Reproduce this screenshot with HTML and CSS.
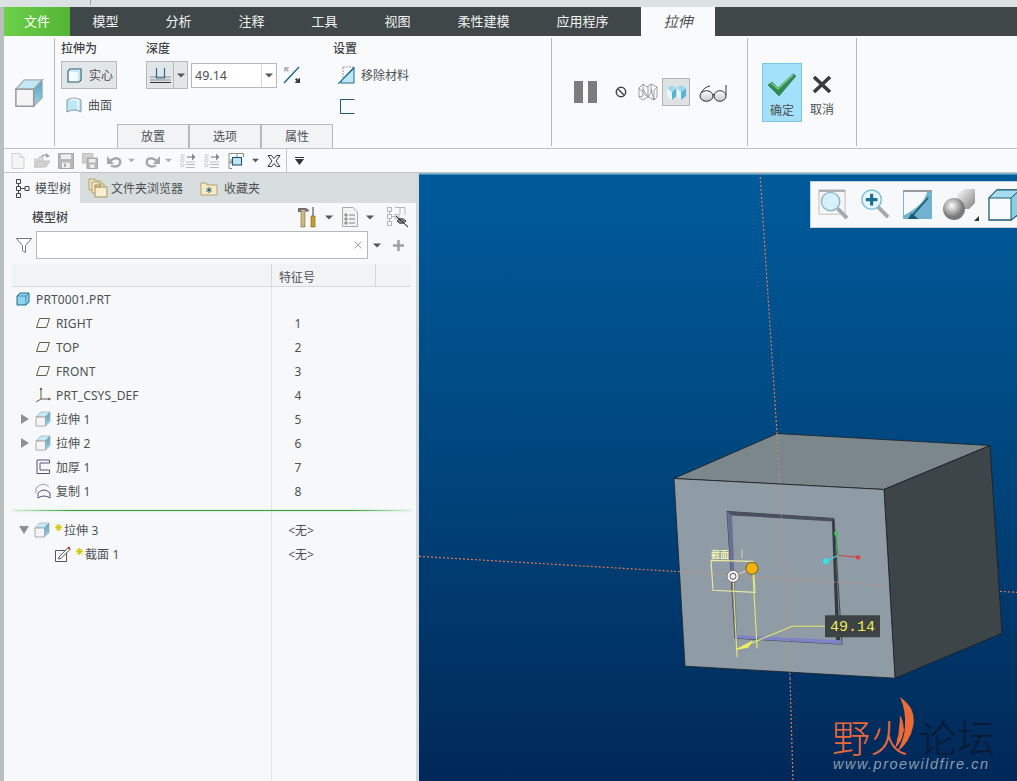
FILE: index.html
```html
<!DOCTYPE html>
<html lang="zh">
<head>
<meta charset="utf-8">
<title>拉伸</title>
<link rel="stylesheet" href="styles.css">
</head>
<body>
<svg class="defs" aria-hidden="true">
  <defs>
    <linearGradient id="cubeSide" x1="0" y1="0" x2="0" y2="1"><stop offset="0" stop-color="#4f9fc2"/><stop offset="1" stop-color="#9ed2e6"/></linearGradient>
    <linearGradient id="lens" x1="0" y1="0" x2="0" y2="1"><stop offset="0" stop-color="#fff"/><stop offset="1" stop-color="#bfc8cc"/></linearGradient>
  </defs>
  <symbol id="cube" viewBox="0 0 16 16">
    <path d="M1 6 5.500 1H15L10.500 6Z" fill="#c5e8f5" stroke="#a3aeb2" stroke-width=".7"/>
    <path d="M10.500 6 15 1V10.500L10.500 15Z" fill="url(#cubeSide)" stroke="#a3aeb2" stroke-width=".7"/>
    <path d="M1 6H10.500V15H1Z" fill="#f5f5f5" stroke="#9a9a9a" stroke-width=".8"/>
  </symbol>
  <symbol id="plane" viewBox="0 0 16 12">
    <path d="M4.500 1.500H14.500L11.500 10.500H1.500Z" fill="none" stroke="#6b5a3c" stroke-width="1"/>
  </symbol>
  <symbol id="caret" viewBox="0 0 8 5">
    <path d="M0 .5H8L4 4.500Z" fill="#555"/>
  </symbol>
  <symbol id="star" viewBox="0 0 7 7">
    <path d="M3.500 0V7M0 3.500H7M1 1 6 6M6 1 1 6" stroke="#d8c800" stroke-width="1.100"/>
  </symbol>
</svg>

<div class="topstrip"><i class="tick"></i></div>

<nav class="menubar">
  <a class="tab file">文件</a>
  <a class="tab">模型</a>
  <a class="tab">分析</a>
  <a class="tab">注释</a>
  <a class="tab">工具</a>
  <a class="tab">视图</a>
  <a class="tab">柔性建模</a>
  <a class="tab">应用程序</a>
  <a class="tab current">拉伸</a>
</nav>

<section class="ribbon">
  <div class="g-type">
    <svg class="ic-type"><use href="#cube"/></svg>
  </div>
  <i class="sep"></i>
  <div class="g-main">
    <div class="cols">
      <div class="col col-a">
        <h4 class="lbl">拉伸为</h4>
        <button class="btn-solid">
          <svg class="i15" viewBox="0 0 15 15"><path d="M1 3 3 1H14V12L12 14H1Z" fill="#f4fbfe" stroke="#1d5a70" stroke-width="1.100"/><path d="M12 3V14M12 3H1" stroke="#8fcbe2" stroke-width=".8" fill="none"/></svg>
          <span>实心</span>
        </button>
        <div class="opt-surface">
          <svg class="i16" viewBox="0 0 16 16"><path d="M1 3Q8 -1 15 3V15Q8 11 1 15Z" fill="#bde6f7" stroke="#7d9aa6"/><path d="M4 3Q8 1.500 12 3V12" fill="none" stroke="#f2fbff" stroke-width="1.500"/></svg>
          <span>曲面</span>
        </div>
      </div>
      <div class="col col-b">
        <h4 class="lbl">深度</h4>
        <div class="depth">
          <div class="split">
            <span class="split-main"><svg class="i20" viewBox="0 0 21 15"><path d="M0 9H21M0 12H21" stroke="#8a8a8a"/><path d="M0 14.500H21" stroke="#333"/><path d="M6.500 0V10H14.500V0" stroke="#1e6f96" fill="none" stroke-width="1.200"/></svg></span>
            <span class="split-arrow"><svg class="caret"><use href="#caret"/></svg></span>
          </div>
          <div class="numbox">
            <span class="num">49.14</span>
            <span class="num-arrow"><svg class="caret"><use href="#caret"/></svg></span>
          </div>
          <svg class="i-flip" viewBox="0 0 18 18"><path d="M1 17 16 1" stroke="#1d6d8d" stroke-width="1.500"/><path d="M1 1H6.500L4.500 3 6 4.500 4.500 6 3 4.500 1 6.500Z" fill="#b5b5b5"/><path d="M17 17H11.500L13.500 15 12 13.500 13.500 12 15 13.500 17 11.500Z" fill="#3c3c3c"/></svg>
          <div class="remove">
            <svg class="i18" viewBox="0 0 18 18"><path d="M3 15 16 1V17H3Z" fill="#bde6f7" stroke="#1d6d8d"/><path d="M5 1H16" stroke="#999" stroke-dasharray="2 1"/><path d="M5 1V12" stroke="#999" stroke-dasharray="2 1"/><path d="M0 18 16 2" stroke="#1d6d8d" stroke-width="1.200"/></svg>
            <span>移除材料</span>
          </div>
        </div>
        <svg class="i-thick" viewBox="0 0 15 15"><path d="M14.500 .5H.5V14.500H14.500" fill="none" stroke="#1d5a70"/></svg>
        <h4 class="lbl lbl-set">设置</h4>
      </div>
    </div>
    <div class="subtabs">
      <a class="subtab">放置</a>
      <a class="subtab">选项</a>
      <a class="subtab">属性</a>
    </div>
  </div>
  <i class="sep"></i>
  <div class="g-preview">
    <svg class="i-pause" viewBox="0 0 23 22"><rect x="0" width="9" height="22" fill="#7d7d7d"/><rect x="14" width="9" height="22" fill="#7d7d7d"/></svg>
    <svg class="i-stop" viewBox="0 0 12 12"><circle cx="6" cy="6" r="4.700" fill="none" stroke="#444" stroke-width="1.500"/><path d="M3 3 9 9" stroke="#444" stroke-width="1.500"/></svg>
    <svg class="i-wire" viewBox="0 0 20 18"><path d="M1 5 5 1 9 4 13 1 19 4 16 7V17L10 14 5 17 1 14ZM5 1V13L1 14M5 6 10 14V3M13 1V10L10 14M13 6 16 17M19 4V14L16 17M1 5 8 13" fill="none" stroke="#666" stroke-width=".6"/></svg>
    <span class="active-view"><svg class="i-shade" viewBox="0 0 19 15"><path d="M0 3 5 7V15L0 11Z" fill="#e9f6fb"/><path d="M5 7 9.500 3V11L5 15Z" fill="#59b3d8"/><path d="M9.500 3 14 7V15L9.500 11Z" fill="#e9f6fb"/><path d="M14 7 19 3V11L14 15Z" fill="#59b3d8"/><path d="M0 3 5 0 9.500 3 5 7ZM9.500 3 14 0 19 3 14 7Z" fill="#9ed9ef"/></svg></span>
    <svg class="i-glass" viewBox="0 0 28 17"><path d="M2 8Q5 2 11 1M27 0V10" fill="none" stroke="#333"/><ellipse cx="7.500" cy="11" rx="6.500" ry="5.300" fill="url(#lens)" stroke="#333"/><ellipse cx="21" cy="11" rx="6" ry="5.300" fill="url(#lens)" stroke="#333"/><path d="M14 10Q15 9 15.500 10" fill="none" stroke="#333"/></svg>
  </div>
  <i class="sep"></i>
  <div class="g-confirm">
    <div class="confirm ok">
      <svg class="i-check" viewBox="0 0 30 24"><path d="M1 12 5 9 11 15 26 1 29 3 12 23Z" fill="#2f8a55" stroke="#1f6a40" stroke-width=".5"/><path d="M4 10 11 16 26 2" fill="none" stroke="#7fcf7f" stroke-width="1.200"/></svg>
      <span>确定</span>
    </div>
    <div class="confirm cancel">
      <svg class="i-x" viewBox="0 0 20 17"><path d="M2 1 18 16M18 1 2 16" stroke="#3a3a3a" stroke-width="3.600"/></svg>
      <span>取消</span>
    </div>
  </div>
  <i class="sep"></i>
</section>

<div class="quick">
  <svg class="qi" viewBox="0 0 16 16"><path d="M2 .5H10L14 4.500V15.500H2Z" fill="#f3f4f4" stroke="#d0d2d2"/><path d="M10 .5V4.500H14" fill="none" stroke="#d0d2d2"/></svg>
  <svg class="qi" viewBox="0 0 16 16"><path d="M0 6H5V4H9V14H0Z" fill="#dcdcdc" stroke="#c0c0c0" stroke-width=".7"/><path d="M0 14 3 8H16L12 14Z" fill="#d2d2d2" stroke="#b8b8b8" stroke-width=".7"/><path d="M7 4Q10 1 13 2.500" fill="none" stroke="#a8a8a8" stroke-width="1.400"/><path d="M12 0 16 3 12 5Z" fill="#a8a8a8"/></svg>
  <svg class="qi" viewBox="0 0 16 16"><path d="M.5 .5H15.500V15.500H.5Z" fill="#b8b8b8" stroke="#a8a8a8"/><path d="M3 1.500H13V6H3Z" fill="#eeeeee"/><path d="M4 9.500H12V15H4Z" fill="#efefef"/><path d="M6 10.500H8V14H6Z" fill="#b0b0b0"/></svg>
  <svg class="qi" viewBox="0 0 16 16"><path d="M.5 .5H11V10H.5Z" fill="#d0d0d0" stroke="#c0c0c0"/><path d="M5 5H15.500V15.500H5Z" fill="#b8b8b8" stroke="#a8a8a8"/><path d="M7 6H13.500V9.500H7ZM8 11.500H12.500V15H8Z" fill="#eee"/></svg>
  <svg class="qi-w" viewBox="0 0 18 16"><path d="M5 12.500Q9 14.500 12.500 12.500 15.500 10 13.500 6.500 10 3.500 4 8" fill="none" stroke="#a8a8a8" stroke-width="2.400"/><path d="M1 3V11H8Z" fill="#a8a8a8"/></svg>
  <svg class="qc"><use href="#caret"/></svg>
  <svg class="qi-w" viewBox="0 0 18 16"><path d="M13 12.500Q9 14.500 5.500 12.500 2.500 10 4.500 6.500 8 3.500 14 8" fill="none" stroke="#a8a8a8" stroke-width="2.400"/><path d="M17 3V11H10Z" fill="#a8a8a8"/></svg>
  <svg class="qc"><use href="#caret"/></svg>
  <svg class="qi" viewBox="0 0 16 16"><path d="M1 2H4V4.500H1ZM1 6.500H4V9H1ZM1 11H4V13.500H1Z" fill="none" stroke="#aaa" stroke-width=".8" stroke-dasharray="1 .6"/><path d="M6 9H15M6 11.500H15M6 14.500H15" stroke="#bbb"/><path d="M7 4H14" stroke="#909090" stroke-width="1.300"/><path d="M12 .5 15.500 4 12 7.500Z" fill="#8a8a8a"/></svg>
  <svg class="qi" viewBox="0 0 16 16"><path d="M1 2H4V4.500H1ZM1 6.500H4V9H1ZM1 11H4V13.500H1Z" fill="none" stroke="#aaa" stroke-width=".8" stroke-dasharray="1 .6"/><path d="M6 9H15M6 11.500H15M6 14.500H15" stroke="#bbb"/><path d="M7 4H14" stroke="#909090" stroke-width="1.300"/><path d="M12 .5 15.500 4 12 7.500Z" fill="#8a8a8a"/></svg>
  <svg class="qi" viewBox="0 0 16 16"><path d="M1 4.500V.5H15.500V4M1 4.500V15.500H4M1 9H5M3 6V11M9 .5V4" fill="none" stroke="#8d8d8d"/><rect x="4.500" y="4.500" width="9" height="7.500" fill="#bfe6f5" stroke="#1d5a70" stroke-width="1.100"/></svg>
  <svg class="qc qc-dark"><use href="#caret"/></svg>
  <svg class="qx" viewBox="0 0 14 12"><path d="M1 .5H4.500L7 3.500 9.500 .5H13L9 6 13 11.500H9.500L7 8.500 4.500 11.500H1L5 6Z" fill="#f8f8f8" stroke="#3a3a3a"/></svg>
  <i class="qsep"></i>
  <svg class="qmore" viewBox="0 0 9 8"><path d="M0 .5H9" stroke="#333"/><path d="M0 2H9L4.500 8Z" fill="#333"/></svg>
</div>

<main class="work">
  <aside class="panel">
    <div class="ptabs">
      <a class="ptab on">
        <svg class="i-tree" viewBox="0 0 15 19"><path d="M1.500 .5H5.500V4.500H1.500ZM1.500 7.500H5.500V11.500H1.500ZM1.500 14.500H5.500V18.500H1.500ZM10 7.500H14V11.500H10ZM3.500 4.500V7.500M3.500 11.500V14.500M5.500 9.500H10" fill="none" stroke="#444"/></svg>
        <span>模型树</span>
      </a>
      <a class="ptab">
        <svg class="i-folders" viewBox="0 0 20 20"><path d="M1 1H7L8 3H13V12H1Z" fill="#f1e3b8" stroke="#b2a070"/><path d="M4 4H10L11 6H16V15H4Z" fill="#f4e8c2" stroke="#b2a070"/><path d="M7 9H19V19H7Z" fill="#f7eecf" stroke="#a5925e"/><path d="M7 9H12L13 7H7Z" fill="#e9d69b" stroke="#a5925e"/></svg>
        <span>文件夹浏览器</span>
      </a>
      <a class="ptab">
        <svg class="i-fav" viewBox="0 0 18 15"><path d="M1 2H6L7 4H17V14H1Z" fill="#f6ebc4" stroke="#b2a070"/><path d="M9 6V12M6.400 7.500 11.600 10.500M11.600 7.500 6.400 10.500" stroke="#1d5a70"/></svg>
        <span>收藏夹</span>
      </a>
    </div>

    <div class="phead">
      <strong class="ptitle">模型树</strong>
      <svg class="i-tools" viewBox="0 0 18 21"><path d="M3 4H7V20H3Z" fill="#d0b97f" stroke="#7a6840" stroke-width=".6"/><path d="M0 5V1H8L11 3V4.500H7V3H3V5Z" fill="#6f6f6f"/><path d="M14 0H16V9H14Z" fill="#999"/><path d="M13 9H17V20H13Z" fill="#c9a02a" stroke="#6b5a20" stroke-width=".6"/></svg>
      <svg class="c1"><use href="#caret"/></svg>
      <svg class="i-list" viewBox="0 0 16 20"><path d="M.5 .5H11L15.500 5V19.500H.5Z" fill="#f2f3f3" stroke="#aaa"/><path d="M3 7H5V9H3ZM3 11H5V13H3ZM3 15H5V17H3ZM7 8H13M7 12H13M7 16H13" fill="none" stroke="#666" stroke-width=".8"/></svg>
      <svg class="c2"><use href="#caret"/></svg>
      <svg class="i-eye" viewBox="0 0 22 22"><path d="M.5 1.500H4.500V5.500H.5ZM.5 8.500H4.500V12.500H.5ZM.5 15.500H4.500V19.500H.5ZM8 8.500H12V12.500H8ZM2.500 5.500V8.500M2.500 12.500V15.500M4.500 10.500H8M8 1.500H18M13 1.500V8M18 1.500V9" fill="none" stroke="#b5b5b5"/><path d="M10 15Q14 10 19 15Q14 20 10 15Z" fill="#8a8a8a" stroke="#222" stroke-width=".8"/><path d="M9 10 21 21" stroke="#111"/></svg>
    </div>

    <div class="pfilter">
      <svg class="i-funnel" viewBox="0 0 16 15"><path d="M.5 .5H15.500L9.500 7.500V14.500L6.500 12.500V7.500Z" fill="#fff" stroke="#777"/></svg>
      <div class="search"><svg class="i-clear" viewBox="0 0 8 8"><path d="M.5 .5 7.500 7.500M7.500 .5 .5 7.500" stroke="#a5a5a5"/></svg></div>
      <svg class="c3"><use href="#caret"/></svg>
      <svg class="i-plus" viewBox="0 0 11 11"><path d="M5.500 0V11M0 5.500H11" stroke="#a0a0a0" stroke-width="2.500"/></svg>
    </div>

    <div class="thead">
      <span class="th-name"></span>
      <span class="th-id">特征号</span>
      <span class="th-last"></span>
    </div>

    <div class="tree">
      <div class="row root"><div class="name"><svg class="i-part" viewBox="0 0 14 14"><path d="M1 4 4 1H13V10L10 13H1Z" fill="#8fd3ef" stroke="#1d6d8d"/><path d="M1 4H10V13M10 4 13 1" fill="none" stroke="#1d6d8d" stroke-width=".7"/></svg><span>PRT0001.PRT</span></div><div class="id"></div></div>
      <div class="row"><div class="name"><i class="arr"></i><svg class="i-plane"><use href="#plane"/></svg><span>RIGHT</span></div><div class="id">1</div></div>
      <div class="row"><div class="name"><i class="arr"></i><svg class="i-plane"><use href="#plane"/></svg><span>TOP</span></div><div class="id">2</div></div>
      <div class="row"><div class="name"><i class="arr"></i><svg class="i-plane"><use href="#plane"/></svg><span>FRONT</span></div><div class="id">3</div></div>
      <div class="row"><div class="name"><i class="arr"></i><svg class="i-ti" viewBox="0 0 16 16"><path d="M6 1V12L1 15M6 12H15" fill="none" stroke="#6b5a3c"/><path d="M4.500 3 6 .5 7.500 3ZM13.500 10.500 16 12 13.500 13.500Z" fill="#6b5a3c"/></svg><span>PRT_CSYS_DEF</span></div><div class="id">4</div></div>
      <div class="row"><div class="name"><i class="arr tri-r"></i><svg class="i-ti"><use href="#cube"/></svg><span>拉伸 1</span></div><div class="id">5</div></div>
      <div class="row"><div class="name"><i class="arr tri-r"></i><svg class="i-ti"><use href="#cube"/></svg><span>拉伸 2</span></div><div class="id">6</div></div>
      <div class="row"><div class="name"><i class="arr"></i><svg class="i-ti" viewBox="0 0 16 16"><path d="M2 1H14.500V4H5V11H14.500V14.500H2Z" fill="#fbfcfc" stroke="#5f4b82" stroke-width="1"/></svg><span>加厚 1</span></div><div class="id">7</div></div>
      <div class="row"><div class="name"><i class="arr"></i><svg class="i-ti" viewBox="0 0 16 16"><path d="M1 10V5Q8 -2 14 4" fill="none" stroke="#9a9a9a"/><path d="M3 15V10Q9 4 15 10V15Q9 11 3 15Z" fill="none" stroke="#5f4b82"/></svg><span>复制 1</span></div><div class="id">8</div></div>
      <div class="insert"></div>
      <div class="row"><div class="name"><i class="arr tri-d"></i><svg class="i-ti"><use href="#cube"/></svg><svg class="i-star"><use href="#star"/></svg><span class="after-star">拉伸 3</span></div><div class="id none">&lt;无&gt;</div></div>
      <div class="row sub"><div class="name"><svg class="i-ti" viewBox="0 0 16 16"><path d="M.5 4.500H11.500V15.500H.5Z" fill="#fafafa" stroke="#555"/><path d="M4 11 13 1.500 15 3.500 6 12.500 3.500 13Z" fill="#f4f4f4" stroke="#333" stroke-width=".8"/><path d="M12.500 2 14.500 4 15.500 2 14 .5Z" fill="#c0392b"/></svg><svg class="i-star"><use href="#star"/></svg><span class="after-star">截面 1</span></div><div class="id none">&lt;无&gt;</div></div>
    </div>
  </aside>

  <div class="gutter"></div>

  <div class="viewport">
    <svg class="scene" viewBox="419 172 598 609" preserveAspectRatio="none">
      <defs>
        <linearGradient id="bg" x1="0" y1="0" x2="0" y2="1">
          <stop offset="0" stop-color="#005b9b"/>
          <stop offset=".45" stop-color="#00477f"/>
          <stop offset="1" stop-color="#012858"/>
        </linearGradient>
      </defs>
      <rect x="419" y="172" width="598" height="609" fill="url(#bg)"/>
      <rect x="419" y="172" width="598" height="1.500" fill="#7fb6d0"/>
      <path d="M760 172 777 433" class="dash-o"/>
      <path d="M419 556 674 571" class="dash-o"/>
      <path d="M790 678 793 781" class="dash-o"/>
      <path d="M884 585 1017 592" class="dash-o"/>

      <path d="M777 433 990 445 884 489 674 478Z" fill="#7c878c" stroke="#1a1f22" stroke-width=".8"/>
      <path d="M884 489 990 445 1002 633 895 678Z" fill="#3e4548" stroke="#1a1f22" stroke-width=".8"/>
      <path d="M674 478 884 489 895 678 685 666Z" fill="#8f9ca6" stroke="#1a1f22" stroke-width=".8"/>

      <path d="M727 511 834 518 842 644 735 638Z" fill="none" stroke="#2a2f33" stroke-width=".8"/>
      <path d="M727 511 732 515 737 636 735 638Z" fill="#6a7095"/>
      <path d="M727 511 834 518 833 521 732 515Z" fill="#4b4f60"/>
      <path d="M832 521 834 518 840 640 836 640Z" fill="#353a42"/>
      <path d="M737 635 841 640 842 644 735 638Z" fill="#7d83c4"/>

      <path d="M777 433 780 489 790 678" class="dash-o dash-in"/>
      <path d="M674 571 884 585" class="dash-o dash-in"/>

      <path d="M711 560 753 561 755 592 713 590Z" fill="none" stroke="#eaeaa0" stroke-width="1.100"/>
      <text x="711" y="558" class="sec-lbl">截面</text>
      <path d="M742 549V558" stroke="#d8d8a0" stroke-width="1"/>
      <path d="M733 576 737 657M753 573 757 648" stroke="#e9e76a" stroke-width="1.100" fill="none"/>
      <path d="M737 649 792 626H825" stroke="#e9e76a" stroke-width="1.100" fill="none"/>
      <path d="M737 649 752 641 748 647Z" fill="#f0ee60" stroke="#f0ee60"/>
      <path d="M733 576 752 568" stroke="#c8c0c0" stroke-width="1.500"/>
      <circle cx="733" cy="576" r="6" fill="#f2f2f2" stroke="#555" stroke-width=".7"/>
      <circle cx="733" cy="576" r="3" fill="none" stroke="#555"/>
      <circle cx="752" cy="568" r="6" fill="#f5b30c" stroke="#6d5a1a"/>

      <path d="M838 555 836 533" stroke="#36b24a" stroke-width="1.300"/>
      <path d="M838 555 858 557" stroke="#c74444" stroke-width="1"/>
      <path d="M838 555 826 561" stroke="#4fc5d0" stroke-width="1.300"/>
      <circle cx="836" cy="533" r="2" fill="#35d04f"/>
      <circle cx="858" cy="557" r="2.200" fill="#e53b3b"/>
      <circle cx="826" cy="561" r="3" fill="#35e0ea"/>

      <rect x="825" y="615" width="55" height="22" fill="#3d4244"/>
      <text x="830" y="631" class="dim">49.14</text>

      <text x="832" y="752" class="wm wm-o">野火</text>
      <text x="919" y="752" class="wm wm-k">论坛</text>
      <path d="M900 697Q917 708 913 727 910 742 897 752 905 738 905 726 906 710 900 697Z" fill="#ec6a36"/>
      <path d="M900 715Q906 725 902 738 899 745 895 748 899 735 899 728 900 722 900 715Z" fill="#ec6a36"/>
      <text x="833" y="769" class="url">www.proewildfire.cn</text>
    </svg>

    <div class="vtools">
      <svg class="vt" viewBox="0 0 32 32"><path d="M1 1H28V26H1Z" fill="#f6f6f6" stroke="#bdbdbd"/><path d="M1 1H28V3H1Z" fill="#aaa"/><path d="M20 20 30 30" stroke="#a8a8a8" stroke-width="4"/><circle cx="13" cy="13" r="9.500" fill="#d6f0f9" stroke="#8fb8c8" stroke-width="1.500"/></svg>
      <svg class="vt" viewBox="0 0 32 32"><path d="M18 18 29 29" stroke="#a8a8a8" stroke-width="4"/><circle cx="12" cy="11" r="10" fill="#e6f5fb" stroke="#7fc0d8" stroke-width="1.500"/><path d="M12 5V17M6 11H18" stroke="#1d6d8d" stroke-width="3.200"/></svg>
      <svg class="vt" viewBox="0 0 32 32"><path d="M1 1H31V31H1Z" fill="#6fb3cf"/><path d="M1 1H31V3H1Z" fill="#9a9a9a"/><path d="M2 3H26Q22 17 2 27Z" fill="#f6f8f9"/><path d="M10 28 27 9" stroke="#1d5a70" stroke-width="1.800"/><path d="M6 31 10 25 17 31Z" fill="#1d5a70"/></svg>
      <svg class="vt vt-shade" viewBox="0 0 36 32"><defs><radialGradient id="sp" cx=".4" cy=".35"><stop offset="0" stop-color="#fff"/><stop offset="1" stop-color="#7a7a7a"/></radialGradient><linearGradient id="bx" x1="0" y1="0" x2="1" y2="1"><stop offset="0" stop-color="#fff"/><stop offset="1" stop-color="#808080"/></linearGradient></defs><path d="M14 5 21 0H32V14L26 20H14Z" fill="url(#bx)"/><circle cx="11" cy="20" r="11" fill="url(#sp)"/><path d="M36 32H31L36 27Z" fill="#333"/></svg>
      <svg class="vt vt-cube" viewBox="0 0 32 32"><path d="M1 9 9 1H32V24L23 31H1Z" fill="#f8fcfe" stroke="#1d5a70" stroke-width="1.300"/><path d="M1 9 9 1H32L23 9Z" fill="#a6dcf0" stroke="#1d5a70" stroke-width="1"/><path d="M23 9 32 1V24L23 31Z" fill="#8acde6" stroke="#1d5a70" stroke-width="1"/></svg>
    </div>
  </div>
</main>
</body>
</html>
```

FILE: styles.css
```css
* { box-sizing: border-box; }
html, body { margin: 0; padding: 0; }
body {
  width: 1017px;
  height: 781px;
  overflow: hidden;
  display: flex;
  flex-direction: column;
  background: #b9bebf;
  font-family: "Noto Sans", "Noto Sans CJK SC", sans-serif;
  font-size: 12px;
  color: #4c5154;
}
.defs { display: block; width: 0; height: 0; }
svg { display: block; flex: none; }
i { display: block; flex: none; }
a { display: block; }

/* top */
.topstrip { height: 7px; background: #dce1e1; padding-left: 90px; flex: none; }
.tick { width: 1px; height: 5px; background: #9da2a3; }

.menubar {
  height: 29px;
  flex: none;
  background: #3f4749;
  display: flex;
  margin-left: 4px;
  font-size: 13px;
  line-height: 29px;
  color: #f2f4f4;
}
.tab { padding: 0 23.500px; white-space: nowrap; }
.tab.file {
  width: 66px;
  padding: 0;
  margin-right: -1px;
  text-align: center;
  background: linear-gradient(90deg, #6bd048, #54b436);
  color: #fff;
}
.tab.current {
  margin-left: 9px;
  width: 74px;
  padding: 0;
  text-align: center;
  background: #f8fafb;
  color: #4c5154;
  font-size: 14.500px;
  font-style: italic;
}

/* ribbon */
.ribbon {
  height: 113px;
  flex: none;
  margin-left: 4px;
  background: #f8fafb;
  border-bottom: 1px solid #c0c4c4;
  display: flex;
}
.sep { width: 1px; margin: 2px 0; background: #b8bcbd; }
.g-type { width: 50px; display: flex; align-items: center; padding-left: 10px; padding-top: 1px; }
.ic-type { width: 30px; height: 30px; }

.g-main { width: 496px; display: flex; flex-direction: column; padding-left: 6px; }
.cols { height: 88px; display: flex; padding-top: 5px; }
.col { position: relative; }
.col-a { width: 85px; }
.col-b { width: 340px; }
.lbl { margin: 0; font-size: 12px; line-height: 16px; font-weight: 500; color: #3f4447; }
.lbl-set { position: absolute; left: 187px; top: 0; }

.btn-solid {
  width: 56px;
  height: 28px;
  margin-top: 4px;
  padding: 0 0 0 5px;
  border: 1px solid #b5b9ba;
  background: #e3e6e7;
  display: flex;
  align-items: center;
  gap: 7px;
  font: inherit;
  color: inherit;
}
.i15 { width: 15px; height: 15px; }
.opt-surface { display: flex; align-items: center; gap: 6px; margin-top: 8px; padding-left: 5px; height: 16px; }
.i16 { width: 16px; height: 16px; }

.depth { display: flex; align-items: center; margin-top: 4px; height: 28px; }
.split { width: 42px; height: 28px; display: flex; border: 1px solid #b5b9ba; background: #e3e6e7; }
.split-main { width: 27px; display: flex; align-items: center; justify-content: center; border-right: 1px solid #b5b9ba; }
.i20 { width: 21px; height: 15px; }
.split-arrow { flex: 1; display: flex; align-items: center; justify-content: center; }
.caret { width: 8px; height: 5px; }
.numbox {
  width: 86px;
  height: 25px;
  margin-left: 3px;
  border: 1px solid #b5b9ba;
  background: #fff;
  display: flex;
  align-items: center;
}
.num { width: 69px; padding-left: 3px; font-size: 12.500px; }
.num-arrow { flex: 1; height: 100%; display: flex; align-items: center; justify-content: center; border-left: 1px solid #d5d8d9; }
.i-flip { width: 18px; height: 18px; margin-left: 6px; }
.remove { display: flex; align-items: center; gap: 5px; margin-left: 37px; }
.i18 { width: 18px; height: 18px; }
.i-thick { width: 15px; height: 15px; margin: 10px 0 0 194px; }

.subtabs { display: flex; margin-left: 56px; height: 24px; }
.subtab {
  width: 72px;
  height: 24px;
  text-align: center;
  line-height: 24px;
  background: #f1f3f4;
  border: 1px solid #b5b9ba;
  border-bottom: 0;
}

.g-preview { width: 195px; display: flex; align-items: center; padding-left: 22px; }
.i-pause { width: 23px; height: 22px; }
.i-stop { width: 12px; height: 12px; margin-left: 18px; }
.i-wire { width: 20px; height: 18px; margin-left: 11px; }
.active-view { width: 28px; height: 28px; margin-left: 4px; background: #dfe2e3; border: 1px solid #b0b4b5; display: flex; align-items: center; justify-content: center; }
.i-shade { width: 19px; height: 15px; }
.i-glass { width: 28px; height: 17px; margin-left: 9px; margin-top: 2px; }

.g-confirm { width: 108px; display: flex; padding: 27px 0 0 14px; }
.confirm { display: flex; flex-direction: column; align-items: center; }
.ok { width: 40px; height: 59px; background: #a3e0fa; border: 1px solid #79c6de; padding-top: 9px; }
.i-check { width: 30px; height: 24px; }
.ok span { margin-top: 4px; }
.cancel { width: 40px; padding-top: 13px; }
.i-x { width: 20px; height: 17px; }
.cancel span { margin-top: 7px; }

/* quick */
.quick {
  height: 24px;
  flex: none;
  margin-left: 4px;
  padding-left: 6px;
  background: #f8fafb;
  border-bottom: 1px solid #c0c4c4;
  display: flex;
  align-items: center;
  gap: 8px;
}
.qi { width: 16px; height: 16px; }
.qi-w { width: 18px; height: 16px; }
.qc { width: 7px; height: 5px; margin-left: -4px; opacity: .45; }
.qc-dark { margin-left: 0; opacity: 1; }
.qx { width: 14px; height: 12px; }
.qsep { width: 1px; height: 23px; background: #c0c4c4; margin-left: -3px; }
.qmore { width: 9px; height: 8px; }

/* work */
.work { flex: 1; min-height: 0; display: flex; margin-left: 4px; }
.panel { width: 412px; display: flex; flex-direction: column; background: #f6f8f9; }
.gutter { width: 3px; background: #d4d8d9; }

.ptabs { height: 30px; flex: none; display: flex; background: #d8dedd; }
.ptab { height: 30px; display: flex; align-items: center; }
.ptab.on { width: 76px; background: #f6f8f9; padding-left: 11px; gap: 5px; }
.ptab:nth-child(2) { padding-left: 8px; gap: 3px; width: 112px; }
.ptab:nth-child(3) { padding-left: 8px; gap: 6px; }
.i-tree { width: 15px; height: 19px; }
.i-folders { width: 20px; height: 20px; }
.i-fav { width: 18px; height: 15px; }

.phead { height: 28px; flex: none; display: flex; align-items: center; padding-left: 28px; }
.ptitle { width: 266px; font-weight: 500; color: #3f4447; }
.i-tools { width: 18px; height: 21px; }
.phead .c1 { width: 8px; height: 5px; margin-left: 9px; }
.i-list { width: 16px; height: 20px; margin-left: 9px; }
.phead .c2 { width: 8px; height: 5px; margin-left: 8px; }
.i-eye { width: 22px; height: 22px; margin-left: 13px; }

.pfilter { height: 28px; flex: none; display: flex; align-items: center; padding-left: 12px; }
.i-funnel { width: 16px; height: 15px; }
.search {
  width: 332px;
  height: 28px;
  margin-left: 4px;
  background: #fff;
  border: 1px solid #b5b9ba;
  display: flex;
  align-items: center;
  justify-content: flex-end;
  padding-right: 5px;
}
.i-clear { width: 8px; height: 8px; }
.pfilter .c3 { width: 8px; height: 5px; margin-left: 5px; }
.i-plus { width: 11px; height: 11px; margin-left: 12px; }

.thead {
  height: 23px;
  flex: none;
  margin: 5px 5px 0 8px;
  background: #f1f4f5;
  border-bottom: 1px solid #d5d9da;
  display: flex;
  line-height: 27px;
}
.th-name { width: 259px; }
.th-id { width: 104px; padding-left: 7px; border-left: 1px solid #d5d9da; }
.th-last { flex: 1; border-left: 1px solid #d5d9da; }

.tree {
  flex: 1;
  background: linear-gradient(#e1e5e7, #e1e5e7) 267px 0 / 1px 100% no-repeat;
}
.row { height: 24px; display: flex; align-items: center; }
.name { width: 267px; display: flex; align-items: center; padding-left: 16px; letter-spacing: .12px; }
.id { width: 52px; margin-left: 1px; text-align: center; }
.none { padding-left: 6px; }
.arr { width: 9px; height: 11px; margin-right: 6px; }
.tri-r { width: 0; height: 0; border-style: solid; border-width: 5.500px 0 5.500px 8px; border-color: transparent transparent transparent #8d9193; margin-right: 6px; margin-left: 1px; }
.tri-d { width: 0; height: 0; border-style: solid; border-width: 8px 5.500px 0 5.500px; border-color: #8d9193 transparent transparent transparent; margin-right: 5px; margin-left: -1px; }
.i-plane { width: 16px; height: 12px; margin-right: 5px; }
.i-ti { width: 16px; height: 16px; margin-right: 5px; }
.i-star { width: 7px; height: 7px; align-self: flex-start; margin: 3px 2px 0 0; }
.root .name { padding-left: 12px; gap: 6px; }
.i-part { width: 14px; height: 14px; }
.sub .name { padding-left: 51px; }
.insert {
  height: 1px;
  margin: 7px 0 7px 8px;
  width: 399px;
  background: linear-gradient(90deg, #e5f2e5, #35a53b 14%, #35a53b 86%, #e5f2e5);
  box-shadow: 0 0 1.500px #9ad69a;
}

/* viewport */
.viewport { flex: 1; position: relative; overflow: hidden; }
.scene { width: 598px; height: 100%; }
.dash-o { fill: none; stroke: #e07c58; stroke-width: 1.200; stroke-dasharray: 2 2; }
.dash-in { stroke: #c98c76; stroke-width: 1; }
.sec-lbl { font: 700 9px "Noto Sans CJK SC", sans-serif; fill: #f2f2b0; }
.dim { font: 15px "Liberation Mono", monospace; fill: #eeea5a; }
.wm { font: 300 38px "Noto Sans CJK SC", sans-serif; }
.wm-o { fill: #e8693c; }
.wm-k { fill: #0b1a30; }
.url { font: italic 14.500px "Liberation Sans", sans-serif; fill: #8b9dad; letter-spacing: 1.500px; }

.vtools {
  position: absolute;
  top: 8px;
  left: 391px;
  width: 220px;
  height: 47px;
  background: #f6f8f9;
  border: 1px solid #c5d0d6;
  display: flex;
  align-items: center;
  gap: 11px;
  padding-left: 7px;
}
.vt { width: 31px; height: 31px; }
.vt-shade { width: 36px; height: 32px; margin-left: -1px; }
.vt-cube { width: 32px; height: 32px; margin-left: -2px; }
```
